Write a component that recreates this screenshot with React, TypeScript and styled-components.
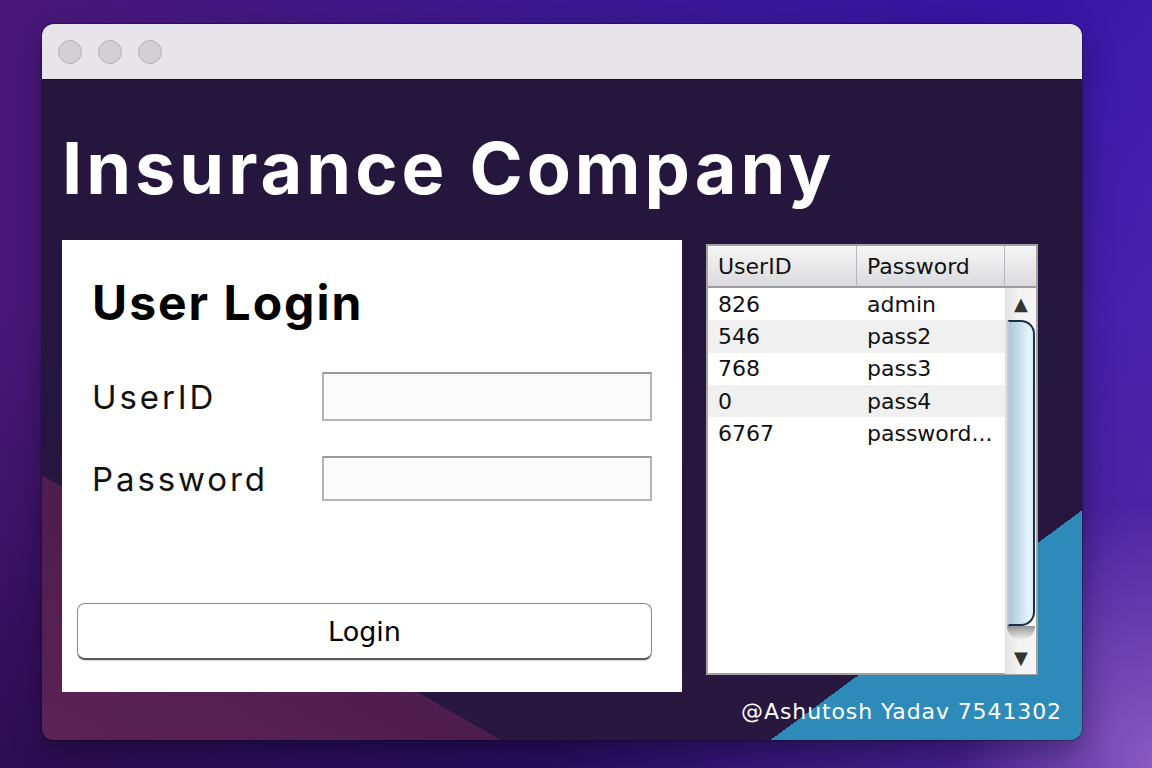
import styled, { createGlobalStyle } from "styled-components";

const GlobalStyle = createGlobalStyle`
  html, body {
    margin: 0;
    padding: 0;
  }
  body {
    width: 1152px;
    height: 768px;
    overflow: hidden;
    background:
      radial-gradient(ellipse 260px 360px at 1152px 768px, rgba(160, 110, 210, 0.75), transparent 75%),
      linear-gradient(120deg, transparent 62%, rgba(100, 50, 180, 0.55) 90%),
      linear-gradient(180deg, rgba(0, 0, 0, 0) 40%, rgba(20, 4, 50, 0.55) 100%),
      linear-gradient(90deg, #4a1878 0%, #3a1894 55%, #3414a8 100%);
  }
`;

const users = [
  { id: "826", password: "admin" },
  { id: "546", password: "pass2" },
  { id: "768", password: "pass3" },
  { id: "0", password: "pass4" },
  { id: "6767", password: "password..." },
];

const Desktop = styled.div`
  padding: 24px 0 0 42px;
`;

const Window = styled.div`
  width: 1040px;
  height: 716px;
  border-radius: 12px;
  overflow: hidden;
  display: flex;
  flex-direction: column;
  box-shadow: 0 10px 30px rgba(0, 0, 0, 0.35), 0 0 0 1px rgba(0, 0, 0, 0.25);
`;

const TitleBar = styled.div`
  height: 55px;
  flex: none;
  background: #e7e5ea;
  border-bottom: 1px solid #15101c;
  display: flex;
  align-items: center;
  gap: 16px;
  padding-left: 16px;
`;

const Light = styled.span`
  width: 22px;
  height: 22px;
  border-radius: 50%;
  background: #d1cfd4;
  border: 1px solid #b4b2b8;
`;

const Content = styled.div`
  flex: 1;
  display: flex;
  flex-direction: column;
  padding: 52px 20px 0 20px;
  background:
    linear-gradient(143.6deg, transparent 83.9%, #2e8bb9 83.9%),
    linear-gradient(210deg, transparent 79%, #4d1d4e 79%, #5a2455 100%),
    linear-gradient(180deg, #24163d 0%, #28173f 100%);
`;

const Heading = styled.h1`
  margin: 0 0 36px 0;
  height: 72px;
  line-height: 72px;
  font-family: Inter, "Liberation Sans", sans-serif;
  font-weight: 700;
  font-size: 72px;
  letter-spacing: 4px;
  color: #ffffff;
`;

const Main = styled.div`
  display: flex;
  align-items: flex-start;
  gap: 24px;
`;

const LoginPanel = styled.div`
  width: 620px;
  height: 452px;
  box-sizing: border-box;
  background: #ffffff;
  padding: 0 30px 0 15px;
  display: flex;
  flex-direction: column;
`;

const PanelTitle = styled.h2`
  margin: 35px 0 0 15px;
  height: 56px;
  line-height: 56px;
  font-family: Inter, "Liberation Sans", sans-serif;
  font-weight: 700;
  font-size: 48px;
  letter-spacing: 2px;
  color: #000000;
`;

const FieldRow = styled.div<{ $h: number; $top: number }>`
  margin-top: ${(p) => p.$top}px;
  margin-left: 15px;
  display: grid;
  grid-template-columns: 230px 1fr;
  align-items: center;
  height: ${(p) => p.$h}px;
`;

const Label = styled.label`
  font-family: Inter, "Liberation Sans", sans-serif;
  font-size: 33px;
  letter-spacing: 2.9px;
  color: #111111;
`;

const Input = styled.input`
  height: 100%;
  box-sizing: border-box;
  border: 2px solid #b4b4b4;
  border-top-color: #9a9a9a;
  background: #fbfbfb;
  outline: none;
`;

const LoginButton = styled.button`
  margin-top: auto;
  margin-bottom: 32px;
  height: 57px;
  width: 575px;
  border-radius: 8px;
  border: 1.5px solid #8c8c8c;
  border-bottom: 2px solid #5c5c5c;
  background: #ffffff;
  box-shadow: 0 1px 1px rgba(0, 0, 0, 0.15);
  font-family: "DejaVu Sans", sans-serif;
  font-size: 27px;
  color: #000000;
`;

const Table = styled.div`
  margin-top: 4px;
  width: 332px;
  height: 431px;
  box-sizing: border-box;
  border: 2px solid #a2a2a4;
  background: #ffffff;
  display: flex;
  flex-direction: column;
  font-family: "DejaVu Sans", sans-serif;
  font-size: 22px;
  color: #111111;
`;

const HeaderRow = styled.div`
  height: 40px;
  flex: none;
  display: grid;
  grid-template-columns: 149px 148px 1fr;
  background: linear-gradient(180deg, #f6f6f6 0%, #e6e6e8 60%, #d9d9dc 100%);
  border-bottom: 2px solid #9d9da0;
`;

const HeaderCell = styled.div`
  display: flex;
  align-items: center;
  padding-left: 10px;
  border-right: 1px solid #b8b8bb;
  &:last-child {
    border-right: none;
  }
`;

const Body = styled.div`
  flex: 1;
  display: flex;
`;

const Rows = styled.div`
  width: 297px;
`;

const Row = styled.div<{ $alt: boolean }>`
  height: 32.3px;
  display: grid;
  grid-template-columns: 149px 148px;
  align-items: center;
  background: ${(p) => (p.$alt ? "#f0f0f0" : "#ffffff")};
`;

const Cell = styled.div`
  padding-left: 10px;
  white-space: nowrap;
`;

const ScrollBar = styled.div`
  flex: 1;
  display: flex;
  flex-direction: column;
  align-items: center;
  background: linear-gradient(90deg, #e4e4e4 0%, #f3f3f3 40%, #f6f6f6 100%);
  border-left: 1px solid #dcdcdc;
`;

const Arrow = styled.div<{ $down?: boolean }>`
  height: 32px;
  flex: none;
  display: flex;
  align-items: center;
  justify-content: center;
  color: #333333;
  font-size: 18px;
  line-height: 1;
  padding-top: ${(p) => (p.$down ? "2px" : "0")};
`;

const Track = styled.div`
  flex: 1;
  width: 100%;
  display: flex;
  flex-direction: column;
`;

const Thumb = styled.div`
  height: 306px;
  margin-left: 1px;
  margin-right: 1px;
  box-sizing: border-box;
  border-radius: 0 14px 14px 0;
  border: 2px solid #1c3048;
  border-left-color: #b9cfe0;
  background: linear-gradient(90deg, #aac6dc 0%, #c9e0ef 45%, #e6f6fc 85%, #d4ebf6 100%);
`;

const ThumbShadow = styled.div`
  height: 14px;
  margin: 0 1px;
  border-radius: 0 0 14px 14px;
  background: linear-gradient(180deg, #6a6a6a 0%, #bdbdbd 60%, transparent 100%);
  opacity: 0.7;
`;

const Footer = styled.div`
  display: flex;
  justify-content: flex-end;
  margin-top: 7px;
  font-family: "DejaVu Sans", sans-serif;
  font-size: 22px;
  letter-spacing: 0.9px;
  color: #ffffff;
`;

export default function App() {
  return (
    <>
      <GlobalStyle />
      <Desktop>
        <Window>
          <TitleBar>
            <Light />
            <Light />
            <Light />
          </TitleBar>
          <Content>
            <Heading>Insurance Company</Heading>
            <Main>
              <LoginPanel>
                <PanelTitle>User Login</PanelTitle>
                <FieldRow $h={49} $top={41}>
                  <Label>UserID</Label>
                  <Input />
                </FieldRow>
                <FieldRow $h={45} $top={35}>
                  <Label>Password</Label>
                  <Input type="password" />
                </FieldRow>
                <LoginButton>Login</LoginButton>
              </LoginPanel>
              <Table>
                <HeaderRow>
                  <HeaderCell>UserID</HeaderCell>
                  <HeaderCell>Password</HeaderCell>
                  <HeaderCell />
                </HeaderRow>
                <Body>
                  <Rows>
                    {users.map((u, i) => (
                      <Row key={u.id} $alt={i % 2 === 1}>
                        <Cell>{u.id}</Cell>
                        <Cell>{u.password}</Cell>
                      </Row>
                    ))}
                  </Rows>
                  <ScrollBar>
                    <Arrow>▲</Arrow>
                    <Track>
                      <Thumb />
                      <ThumbShadow />
                    </Track>
                    <Arrow $down>▼</Arrow>
                  </ScrollBar>
                </Body>
              </Table>
            </Main>
            <Footer>@Ashutosh Yadav 7541302</Footer>
          </Content>
        </Window>
      </Desktop>
    </>
  );
}
